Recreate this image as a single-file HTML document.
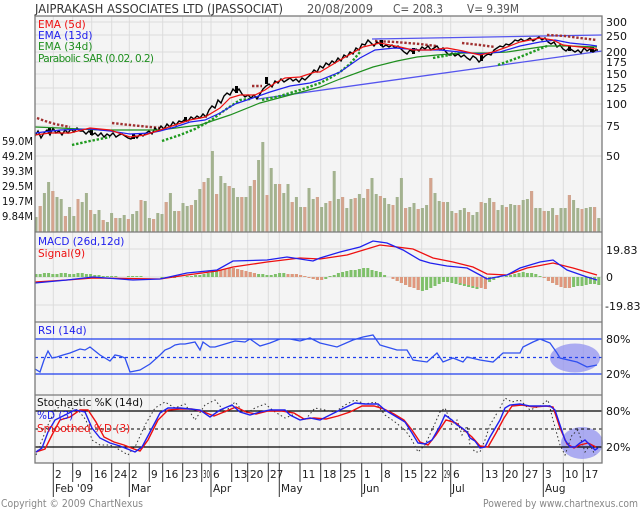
<!DOCTYPE html>
<html><head><meta charset="utf-8"><style>
html,body{margin:0;padding:0;background:#fff;}
svg{display:block;}
text{font-family:"DejaVu Sans","Liberation Sans",sans-serif;}
</style></head><body>
<svg width="640" height="510" viewBox="0 0 640 510" xmlns="http://www.w3.org/2000/svg">
<rect width="640" height="510" fill="#fff"/>
<rect x="35" y="16" width="567" height="447" fill="#f4f4f4"/>
<g stroke="#dcdcdc" stroke-width="1">
<path d="M53.3,16V463M72.7,16V463M91.7,16V463M111.7,16V463M129.3,16V463M149.3,16V463M162.7,16V463M182.7,16V463M201.7,16V463M211,16V463M231.7,16V463M247.7,16V463M268.3,16V463M279.3,16V463M300,16V463M320.7,16V463M340.7,16V463M361.7,16V463M381.7,16V463M401.7,16V463M421.7,16V463M442.7,16V463M450.7,16V463M482.7,16V463M503.3,16V463M523.3,16V463M543.3,16V463M563.3,16V463M583.3,16V463"/>
<path d="M35,22H602M35,35H602M35,52H602M35,62H602M35,74H602M35,88H602M35,104H602M35,126H602M35,156H602M35,249H602M35,277H602M35,305H602"/>
</g>
<path stroke="#a3b28f" stroke-width="3" fill="none" d="M36,232V217V232m4.2,0V206V232m4.2,0V193V232m4.2,0V182V232m4.2,0V191V232m4.2,0V197V232m4.2,0V199V232m4.2,0V216V232m4.2,0V207V232m4.2,0V216V232m4.2,0V199V232m4.2,0V202V232m4.2,0V193V232m4.2,0V210V232m4.2,0V214V232m4.2,0V210V232m4.2,0V220V232m4.2,0V222V232m4.2,0V213V232m4.2,0V218V232m4.2,0V218V232m4.2,0V215V232m4.2,0V219V232m4.2,0V214V232m4.2,0V211V232m4.2,0V200V232m4.2,0V201V232m4.2,0V218V232m4.2,0V219V232m4.2,0V213V232m4.2,0V214V232m4.2,0V202V232m4.2,0V193V232m4.2,0V211V232m4.2,0V211V232m4.2,0V203V232m4.2,0V206V232m4.2,0V205V232m4.2,0V200V232m4.2,0V189V232m4.2,0V182V232m4.2,0V178V232m4.2,0V151V232m4.2,0V194V232m4.2,0V176V232m4.2,0V183V232m4.2,0V186V232m4.2,0V188V232m4.2,0V197V232m4.2,0V197V232m4.2,0V197V232m4.2,0V186V232m4.2,0V180V232m4.2,0V160V232m4.2,0V142V232m4.2,0V195V232m4.2,0V168V232m4.2,0V184V232m4.2,0V184V232m4.2,0V193V232m4.2,0V184V232m4.2,0V202V232m4.2,0V197V232m4.2,0V207V232m4.2,0V207V232m4.2,0V188V232m4.2,0V199V232m4.2,0V197V232m4.2,0V207V232m4.2,0V203V232m4.2,0V201V232m4.2,0V171V232m4.2,0V199V232m4.2,0V197V232m4.2,0V208V232m4.2,0V199V232m4.2,0V198V232m4.2,0V194V232m4.2,0V198V232m4.2,0V189V232m4.2,0V178V232m4.2,0V194V232m4.2,0V196V232m4.2,0V198V232m4.2,0V204V232m4.2,0V205V232m4.2,0V197V232m4.2,0V178V232m4.2,0V208V232m4.2,0V207V232m4.2,0V203V232m4.2,0V209V232m4.2,0V208V232m4.2,0V205V232m4.2,0V178V232m4.2,0V193V232m4.2,0V201V232m4.2,0V202V232m4.2,0V202V232m4.2,0V211V232m4.2,0V213V232m4.2,0V210V232m4.2,0V208V232m4.2,0V212V232m4.2,0V215V232m4.2,0V212V232m4.2,0V202V232m4.2,0V203V232m4.2,0V198V232m4.2,0V202V232m4.2,0V210V232m4.2,0V205V232m4.2,0V207V232m4.2,0V204V232m4.2,0V205V232m4.2,0V205V232m4.2,0V200V232m4.2,0V199V232m4.2,0V191V232m4.2,0V208V232m4.2,0V208V232m4.2,0V211V232m4.2,0V211V232m4.2,0V208V232m4.2,0V215V232m4.2,0V208V232m4.2,0V208V232m4.2,0V195V232m4.2,0V200V232m4.2,0V208V232m4.2,0V209V232m4.2,0V208V232m4.2,0V207V232m4.2,0V207V232m4.2,0V218V232"/>
<path stroke="#d4a48f" stroke-width="3" fill="none" d="M40.2,232V206V232m12.6,0V191V232m12.6,0V216V232m12.6,0V199V232m12.6,0V210V232m12.6,0V220V232m12.6,0V218V232m12.6,0V219V232m12.6,0V200V232m12.6,0V219V232m12.6,0V202V232m12.6,0V211V232m12.6,0V205V232m12.6,0V182V232m12.6,0V194V232m12.6,0V186V232m12.6,0V197V232m12.6,0V180V232m12.6,0V195V232m12.6,0V184V232m12.6,0V202V232m12.6,0V207V232m12.6,0V197V232m12.6,0V201V232m12.6,0V197V232m12.6,0V198V232m12.6,0V189V232m12.6,0V196V232m12.6,0V205V232m12.6,0V208V232m12.6,0V209V232m12.6,0V178V232m12.6,0V202V232m12.6,0V213V232m12.6,0V212V232m12.6,0V202V232m12.6,0V202V232m12.6,0V207V232m12.6,0V205V232m12.6,0V191V232m12.6,0V211V232m12.6,0V215V232m12.6,0V195V232m12.6,0V209V232m12.6,0V207V232"/>
<g stroke="#5555ee" stroke-width="1.3" fill="none">
<path d="M372,39L602,35"/><path d="M258,99L602,51"/>
</g>
<g fill="none" stroke-width="2.4" stroke-dasharray="2.4 1.8">
<polyline stroke="#a03030" points="37,118 45,121 55,124 70,127"/>
<polyline stroke="#1f9a1f" points="72,145 90,141 110,137"/>
<polyline stroke="#a03030" points="112,123 130,125 150,127 160,128"/>
<polyline stroke="#1f9a1f" points="162,141 180,135 195,129 210,121 225,110 240,100 250,99"/>
<polyline stroke="#a03030" points="252,86 262,86"/>
<polyline stroke="#1f9a1f" points="262,100 280,96 300,90 320,83 330,78 340,72 350,64 360,52"/>
<polyline stroke="#a03030" points="375,41 395,42 420,44 436,46"/>
<polyline stroke="#1f9a1f" points="433,58 460,53"/>
<polyline stroke="#a03030" points="462,43 480,45 495,47"/>
<polyline stroke="#1f9a1f" points="498,65 520,57 547,46"/>
<polyline stroke="#a03030" points="547,35 565,36 580,38 597,40"/>
</g>
<polyline fill="none" stroke="#000" stroke-width="1.4" points="35,136 38,131 41,138 44,133 47,130 50,135 53,128 56,133 59,131 62,135 65,130 68,133 71,129 74,132 77,128 80,131 83,131 86,134 89,131 92,135 95,133 98,136 101,133 104,137 107,134 110,136 113,133 116,137 119,135 122,134 125,136 128,138 131,139 134,135 137,138 140,134 143,136 146,133 149,131 152,134 155,128 158,131 161,126 164,129 167,124 170,127 173,122 176,125 179,121 182,122 185,119 188,121 191,117 194,119 197,116 200,118 203,114 206,117 209,110 212,106 215,108 218,100 221,103 224,96 227,93 230,95 233,89 236,92 239,89 242,94 245,97 248,95 251,98 254,95 257,99 260,94 263,89 266,86 269,84 272,87 275,81 278,83 281,79 284,82 287,80 290,78 293,81 296,79 299,82 302,78 305,80 308,77 311,74 314,70 317,72 320,66 323,68 326,63 329,65 332,61 335,63 338,58 341,61 344,55 347,57 350,52 353,54 356,48 359,50 362,44 365,45 368,40 371,43 374,46 377,42 380,44 383,47 386,45 389,47 392,45 395,48 398,46 401,49 404,52 407,54 410,50 413,52 416,49 419,51 422,47 425,49 428,46 431,50 434,48 437,46 440,50 443,48 446,52 449,55 452,53 455,56 458,54 461,57 464,55 467,58 470,60 473,56 476,58 479,62 482,59 485,56 488,54 491,55 494,50 497,48 500,46 503,47 506,44 509,45 512,43 515,40 518,41 521,39 524,41 527,40 530,38 533,41 536,39 539,37 542,40 545,38 548,42 551,44 554,42 557,47 560,45 563,49 566,51 569,48 572,50 575,52 578,50 581,53 584,48 587,51 590,49 593,52 596,50 598,50"/>
<g fill="#000"><rect x="48" y="128" width="3" height="6"/><rect x="90" y="130" width="3" height="5"/><rect x="132" y="134" width="3" height="5"/><rect x="184" y="117" width="3" height="5"/><rect x="235" y="86" width="3" height="7"/><rect x="265" y="77" width="3" height="7"/><rect x="380" y="40" width="3" height="6"/><rect x="412" y="48" width="3" height="6"/><rect x="480" y="55" width="3" height="6"/><rect x="568" y="46" width="3" height="5"/><rect x="590" y="47" width="4" height="5"/></g>
<polyline fill="none" stroke="#1f8f1f" stroke-width="1.2" points="35,127 60,128 100,130 140,130 160,130 200,125 230,115 260,103 290,95 320,87 340,79 373,67 397,61 417,57 437,55 463,53 487,53 507,52 527,49 547,46 570,46 597,47"/>
<polyline fill="none" stroke="#2020ee" stroke-width="1.2" points="35,133 60,130 90,129 110,131 130,134 150,133 160,131 175,127 190,122 205,120 220,113 235,104 250,99 270,92 290,86 310,83 320,80 340,72 360,58 375,50 395,48 420,50 440,50 460,52 480,54 500,52 520,46 540,42 555,40 570,43 590,45 597,46"/>
<polyline fill="none" stroke="#ee1010" stroke-width="1.2" points="35,135 50,133 70,133 90,128 110,130 130,137 145,135 160,130 175,125 190,120 205,117 220,108 230,98 240,95 255,95 265,90 275,83 285,78 300,77 315,72 320,72 340,60 363,47 380,43 400,47 413,50 430,50 447,48 463,51 480,55 493,52 507,47 520,42 540,38 553,40 563,45 580,47 597,49"/>
<path stroke="#7fc06a" stroke-width="3" fill="none" d="M36,277V274V277m4.2,0V274V277m4.2,0V273V277m4.2,0V273V277m4.2,0V274V277m4.2,0V274V277m4.2,0V273V277m4.2,0V273V277m4.2,0V274V277m4.2,0V274V277m4.2,0V273V277m4.2,0V273V277m4.2,0V274V277m4.2,0V274V277m4.2,0V275V277m4.2,0V275V277m4.2,0V276V277m4.2,0V276V277m4.2,0V276V277m4.2,0V276V277m4.2,0V277V277m4.2,0V277V277m4.2,0V276V277m4.2,0V276V277m4.2,0V276V277m4.2,0V276V277m4.2,0V277V277m4.2,0V277V277m4.2,0V277V277m4.2,0V277V277m4.2,0V278V277m4.2,0V278V277m4.2,0V278V277m4.2,0V278V277m4.2,0V277V277m4.2,0V277V277m4.2,0V276V277m4.2,0V276V277m4.2,0V275V277m4.2,0V275V277m4.2,0V274V277m4.2,0V273V277m4.2,0V272V277m4.2,0V271V277m4.2,0V270V277m4.2,0V269V277m4.2,0V268V277m4.2,0V268V277m4.2,0V269V277m4.2,0V270V277m4.2,0V271V277m4.2,0V272V277m4.2,0V273V277m4.2,0V274V277m4.2,0V274V277m4.2,0V275V277m4.2,0V275V277m4.2,0V274V277m4.2,0V273V277m4.2,0V273V277m4.2,0V274V277m4.2,0V274V277m4.2,0V274V277m4.2,0V275V277m4.2,0V276V277m4.2,0V278V277m4.2,0V279V277m4.2,0V280V277m4.2,0V280V277m4.2,0V279V277m4.2,0V276V277m4.2,0V275V277m4.2,0V273V277m4.2,0V272V277m4.2,0V271V277m4.2,0V270V277m4.2,0V270V277m4.2,0V269V277m4.2,0V268V277m4.2,0V268V277m4.2,0V270V277m4.2,0V271V277m4.2,0V272V277m4.2,0V275V277m4.2,0V277V277m4.2,0V279V277m4.2,0V281V277m4.2,0V283V277m4.2,0V285V277m4.2,0V287V277m4.2,0V288V277m4.2,0V290V277m4.2,0V291V277m4.2,0V290V277m4.2,0V288V277m4.2,0V286V277m4.2,0V284V277m4.2,0V282V277m4.2,0V282V277m4.2,0V283V277m4.2,0V284V277m4.2,0V285V277m4.2,0V286V277m4.2,0V287V277m4.2,0V288V277m4.2,0V289V277m4.2,0V287V277m4.2,0V284V277m4.2,0V282V277m4.2,0V280V277m4.2,0V278V277m4.2,0V277V277m4.2,0V276V277m4.2,0V275V277m4.2,0V274V277m4.2,0V273V277m4.2,0V272V277m4.2,0V273V277m4.2,0V273V277m4.2,0V274V277m4.2,0V276V277m4.2,0V278V277m4.2,0V281V277m4.2,0V283V277m4.2,0V285V277m4.2,0V287V277m4.2,0V288V277m4.2,0V288V277m4.2,0V287V277m4.2,0V286V277m4.2,0V286V277m4.2,0V285V277m4.2,0V284V277m4.2,0V284V277m4.2,0V285V277"/>
<path stroke="#e0977e" stroke-width="3" fill="none" d="M220.8,277V270V277m4.2,0V269V277m4.2,0V268V277m4.2,0V268V277m4.2,0V269V277m4.2,0V270V277m4.2,0V271V277m4.2,0V272V277m4.2,0V273V277M288,277V274V277m4.2,0V274V277m4.2,0V274V277m4.2,0V275V277m4.2,0V276V277m4.2,0V278V277m4.2,0V279V277m4.2,0V280V277m4.2,0V280V277M393,277V279V277m4.2,0V281V277m4.2,0V283V277m4.2,0V285V277m4.2,0V287V277m4.2,0V288V277m4.2,0V290V277M460.2,277V283V277m4.2,0V284V277m4.2,0V285V277m4.2,0V286V277m4.2,0V287V277m4.2,0V288V277m4.2,0V289V277M544.2,277V278V277m4.2,0V281V277m4.2,0V283V277m4.2,0V285V277m4.2,0V287V277m4.2,0V288V277m4.2,0V288V277"/>
<polyline fill="none" stroke="#ee1010" stroke-width="1.3" points="35,282 67,280 93,278 160,279 187,275 217,271 233,267 267,262 300,258 320,259 347,255 380,245 397,247 413,249 433,258 453,262 473,267 487,274 507,275 527,268 553,263 573,268 597,275"/>
<polyline fill="none" stroke="#2020ee" stroke-width="1.3" points="35,283 67,280 93,277 133,280 160,279 187,273 217,270 233,261 267,260 287,257 313,261 320,258 340,252 360,247 373,241 387,243 403,250 420,260 430,263 447,266 467,268 480,275 487,279 507,275 520,268 540,262 553,260 567,270 587,277 597,280"/>
<ellipse cx="575" cy="358" rx="25" ry="14.5" fill="#8c8cf0" fill-opacity="0.7"/>
<g stroke="#1f3fee" stroke-width="1.3" fill="none">
<path d="M35,339H602M35,374H602"/>
<path d="M35,357.5H602" stroke-dasharray="3 3"/>
<polyline stroke="#3050f0" points="35,369 40,372 44,360 48,351 52,358 57,357 63,355 70,353 80,349 85,350 90,347 95,351 100,355 105,358 110,361 115,355 120,356 125,358 130,372 140,370 150,364 160,355 165,350 170,348 175,345 180,344 185,344 195,342 200,350 203,342 210,347 215,347 225,344 235,341 245,342 250,339 260,346 270,343 280,339 290,339 300,341 310,338 320,343 337,347 353,340 363,337 373,335 380,345 397,350 407,350 413,360 427,362 437,353 443,362 453,358 463,362 467,357 480,360 493,362 503,353 520,353 523,347 533,342 540,339 550,343 557,353 560,358 577,362 587,367 597,365"/>
</g>
<ellipse cx="582" cy="443" rx="21" ry="16" fill="#8c8cf0" fill-opacity="0.7"/>
<g stroke="#000" stroke-width="1.2" fill="none">
<path d="M35,411H602M35,447H602"/>
<path d="M35,429H602" stroke-dasharray="3 3" stroke-width="1"/>
</g>
<polyline fill="none" stroke="#333" stroke-width="1" stroke-dasharray="1.5 2.5" points="36,455 42,440 48,425 55,410 62,405 70,408 78,410 86,420 92,440 100,445 110,445 120,450 128,455 136,445 145,425 155,408 165,402 175,408 185,404 195,420 205,405 215,400 225,412 235,402 245,414 255,408 265,404 275,412 285,418 295,414 305,420 315,408 325,410 335,412 345,405 355,400 365,404 375,402 385,415 395,422 405,430 412,440 418,452 425,445 432,430 440,412 445,408 452,425 457,420 462,435 467,426 470,445 475,452 480,452 485,440 490,425 500,408 505,398 512,402 520,400 530,410 540,406 548,400 553,420 560,445 565,455 572,435 578,430 585,452 590,445 595,455"/>
<polyline fill="none" stroke="#ee1010" stroke-width="1.4" points="36,452 45,449 52,435 60,420 70,417 80,410 88,410 96,422 104,437 114,442 124,445 134,449 140,451 148,440 158,420 168,410 180,409 192,409 204,412 214,416 224,412 236,407 246,412 256,414 268,411 282,411 294,413 304,419 314,418 326,419 338,416 350,412 362,406 374,406 384,409 394,414 404,420 412,430 420,442 428,445 436,435 446,420 456,423 464,430 472,437 480,446 488,447 496,433 504,418 512,406 522,405 534,407 546,406 553,407 560,428 567,444 574,448 580,445 588,443 596,447"/>
<polyline fill="none" stroke="#2020ee" stroke-width="1.4" points="36,452 42,448 48,432 55,420 65,415 75,410 85,412 92,428 100,438 110,443 120,446 130,450 135,452 142,447 150,432 160,413 168,408 180,408 190,409 200,410 210,417 220,410 232,405 240,412 250,415 260,412 270,410 285,410 290,415 300,420 310,418 320,420 330,415 340,410 355,403 365,404 378,404 385,410 395,416 405,422 412,433 418,443 425,444 432,440 440,426 445,415 452,420 457,425 462,428 467,432 470,438 475,441 480,448 485,447 490,437 500,420 505,408 510,405 520,404 530,406 540,406 550,406 555,410 560,425 565,440 570,447 575,447 580,443 585,440 590,445 595,450 598,448"/>
<g stroke="#7a7a7a" stroke-width="1.3" fill="none">
<rect x="35" y="16" width="567" height="447"/>
<path d="M35,232H602M35,322H602M35,395H602"/>
</g>
<g stroke="#333" stroke-width="1">
<path d="M72.7,463V482M91.7,463V482M111.7,463V482M149.3,463V482M162.7,463V482M182.7,463V482M201.7,463V482M231.7,463V482M247.7,463V482M268.3,463V482M300,463V482M320.7,463V482M340.7,463V482M381.7,463V482M401.7,463V482M421.7,463V482M442.7,463V482M482.7,463V482M503.3,463V482M523.3,463V482M563.3,463V482M583.3,463V482"/>
<path d="M53.3,463V497M129.3,463V497M211,463V497M279.3,463V497M361.7,463V497M450.7,463V497M543.3,463V497"/>
</g>
<g font-size="10.5" fill="#222">
<text x="55" y="478">2</text><text x="75" y="478">9</text><text x="94" y="478">16</text><text x="114" y="478">24</text><text x="131" y="478">2</text><text x="151" y="478">9</text><text x="165" y="478">16</text><text x="185" y="478">23</text><text x="203" y="478" textLength="7" lengthAdjust="spacingAndGlyphs">30</text><text x="213" y="478">6</text><text x="234" y="478">13</text><text x="250" y="478">20</text><text x="270" y="478">27</text><text x="302" y="478">11</text><text x="323" y="478">18</text><text x="343" y="478">25</text><text x="364" y="478">1</text><text x="384" y="478">8</text><text x="404" y="478">15</text><text x="424" y="478">22</text><text x="444" y="478" textLength="6" lengthAdjust="spacingAndGlyphs">29</text><text x="453" y="478">6</text><text x="485" y="478">13</text><text x="505" y="478">20</text><text x="525" y="478">27</text><text x="545" y="478">3</text><text x="565" y="478">10</text><text x="585" y="478">17</text>
<text x="55" y="492">Feb '09</text><text x="131" y="492">Mar</text><text x="213" y="492">Apr</text><text x="281" y="492">May</text><text x="363" y="492">Jun</text><text x="452" y="492">Jul</text><text x="545" y="492">Aug</text>
</g>
<g font-size="11" fill="#111">
<text x="606" y="26">300</text><text x="606" y="40">250</text><text x="606" y="56">200</text><text x="606" y="66">175</text><text x="606" y="78">150</text><text x="606" y="92">125</text><text x="606" y="108">100</text><text x="606" y="130">75</text><text x="606" y="160">50</text>
<text x="606" y="254">19.83</text><text x="606" y="281">0</text><text x="605" y="310">-19.83</text>
<text x="606" y="343">80%</text><text x="606" y="378">20%</text>
<text x="606" y="415">80%</text><text x="606" y="451">20%</text>
</g>
<g font-size="10.5" fill="#111" text-anchor="end">
<text x="33" y="145" textLength="31" lengthAdjust="spacingAndGlyphs">59.0M</text><text x="33" y="160" textLength="31" lengthAdjust="spacingAndGlyphs">49.2M</text><text x="33" y="175" textLength="31" lengthAdjust="spacingAndGlyphs">39.3M</text><text x="33" y="190" textLength="31" lengthAdjust="spacingAndGlyphs">29.5M</text><text x="33" y="205" textLength="31" lengthAdjust="spacingAndGlyphs">19.7M</text><text x="33" y="220" textLength="31" lengthAdjust="spacingAndGlyphs">9.84M</text>
</g>
<g font-size="10.5">
<text x="38" y="28" fill="#ee1010">EMA (5d)</text>
<text x="38" y="39" fill="#2020ee">EMA (13d)</text>
<text x="38" y="50" fill="#1f8f1f">EMA (34d)</text>
<text x="38" y="62" fill="#1f8f1f" textLength="116">Parabolic SAR (0.02, 0.2)</text>
<text x="38" y="245" fill="#2020ee">MACD (26d,12d)</text>
<text x="38" y="257" fill="#ee1010">Signal(9)</text>
<text x="38" y="334" fill="#2020ee">RSI (14d)</text>
<text x="37" y="406" fill="#111">Stochastic %K (14d)</text>
<text x="37" y="419" fill="#2020ee">%D (3)</text>
<text x="37" y="432" fill="#ee1010">Smoothed %D (3)</text>
</g>
<g font-size="12.5" fill="#333">
<text x="35" y="13" textLength="248" lengthAdjust="spacingAndGlyphs">JAIPRAKASH ASSOCIATES LTD (JPASSOCIAT)</text>
<text x="307" y="13" textLength="66" lengthAdjust="spacingAndGlyphs" fill="#555">20/08/2009</text>
<text x="393" y="13" textLength="50" lengthAdjust="spacingAndGlyphs" fill="#555">C= 208.3</text>
<text x="467" y="13" textLength="52" lengthAdjust="spacingAndGlyphs" fill="#555">V= 9.39M</text>
</g>
<g font-size="10.5" fill="#888">
<text x="1" y="507" textLength="142" lengthAdjust="spacingAndGlyphs">Copyright © 2009 ChartNexus</text>
<text x="638" y="507" text-anchor="end" textLength="155" lengthAdjust="spacingAndGlyphs">Powered by www.chartnexus.com</text>
</g>
</svg>
</body></html>
